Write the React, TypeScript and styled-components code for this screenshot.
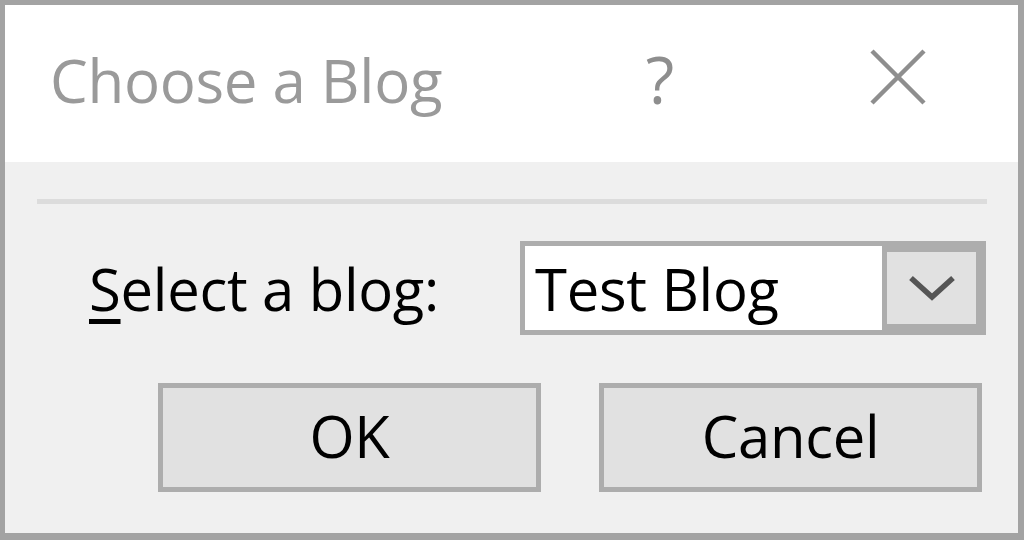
import styled, { createGlobalStyle } from 'styled-components';

const GlobalStyle = createGlobalStyle`
  html, body {
    margin: 0;
    padding: 0;
    background: #a0a0a0;
  }
  body {
    font-family: 'Open Sans', 'Noto Sans', sans-serif;
  }
`;

const Window = styled.div`
  box-sizing: border-box;
  width: 1024px;
  height: 540px;
  border-style: solid;
  border-color: #a3a3a3;
  border-width: 5px 6px 7px 5px;
  display: flex;
  flex-direction: column;
  background: #f0f0f0;
`;

const TitleBar = styled.div`
  height: 157px;
  background: #ffffff;
  display: flex;
  align-items: center;
  padding-left: 45px;
  padding-bottom: 8px;
  box-sizing: border-box;
`;

const Title = styled.div`
  flex: 1;
  font-size: 60px;
  color: #9a9a9a;
  letter-spacing: -0.3px;
`;

const HelpGlyph = styled.div`
  width: 52px;
  text-align: center;
  font-size: 66px;
  line-height: 1;
  color: #8e8e8e;
  margin-right: 184px;
  padding-bottom: 4px;
`;

const CloseButton = styled.div`
  width: 56px;
  height: 56px;
  margin-right: 92px;
  margin-bottom: 6px;
  display: flex;
  align-items: center;
  justify-content: center;
`;

const Body = styled.div`
  flex: 1;
  display: flex;
  flex-direction: column;
  padding: 37px 31px 0 32px;
`;

const Separator = styled.div`
  height: 5px;
  background: #dcdcdc;
`;

const FieldRow = styled.div`
  display: flex;
  align-items: center;
  margin-top: 37px;
`;

const Label = styled.label`
  width: 483px;
  padding-left: 52px;
  box-sizing: border-box;
  font-size: 58px;
  color: #000;
  letter-spacing: -0.3px;
`;

const Key = styled.span`
  text-decoration: underline;
  text-decoration-thickness: 5px;
  text-underline-offset: 8px;
`;

const Combo = styled.div`
  display: flex;
  width: 466px;
  height: 94px;
  box-sizing: border-box;
  border: 5px solid #adadad;
  background: #ffffff;
`;

const ComboValue = styled.div`
  flex: 1;
  display: flex;
  align-items: center;
  padding-left: 10px;
  font-size: 58px;
  color: #000;
  letter-spacing: -0.3px;
`;

const ComboArrow = styled.div`
  width: 104px;
  box-sizing: border-box;
  border-style: solid;
  border-color: #adadad;
  border-width: 11px 10px 11px 5px;
  margin: -5px -5px -5px 0;
  background: #e1e1e1;
  display: flex;
  align-items: center;
  justify-content: center;
`;

const ButtonRow = styled.div`
  display: flex;
  gap: 58px;
  padding-left: 121px;
  margin-top: 48px;
`;

const Button = styled.button`
  width: 383px;
  height: 109px;
  box-sizing: border-box;
  border: 5px solid #adadad;
  background: #e1e1e1;
  font-family: 'Open Sans', 'Noto Sans', sans-serif;
  font-size: 58px;
  color: #000;
  padding: 0 0 4px;
  letter-spacing: -0.3px;
`;

export default function App() {
  return (
    <>
      <GlobalStyle />
      <Window>
        <TitleBar>
          <Title>Choose a Blog</Title>
          <HelpGlyph>?</HelpGlyph>
          <CloseButton>
            <svg width="56" height="56" viewBox="0 0 56 56">
              <path d="M2 2 L54 54 M54 2 L2 54" stroke="#8e8e8e" strokeWidth="4.5" fill="none" />
            </svg>
          </CloseButton>
        </TitleBar>
        <Body>
          <Separator />
          <FieldRow>
            <Label>
              <Key>S</Key>elect a blog:
            </Label>
            <Combo>
              <ComboValue>Test Blog</ComboValue>
              <ComboArrow>
                <svg width="48" height="30" viewBox="0 0 48 30">
                  <path d="M3 5 L24 24 L45 5" stroke="#555" strokeWidth="5.5" fill="none" />
                </svg>
              </ComboArrow>
            </Combo>
          </FieldRow>
          <ButtonRow>
            <Button>OK</Button>
            <Button>Cancel</Button>
          </ButtonRow>
        </Body>
      </Window>
    </>
  );
}
